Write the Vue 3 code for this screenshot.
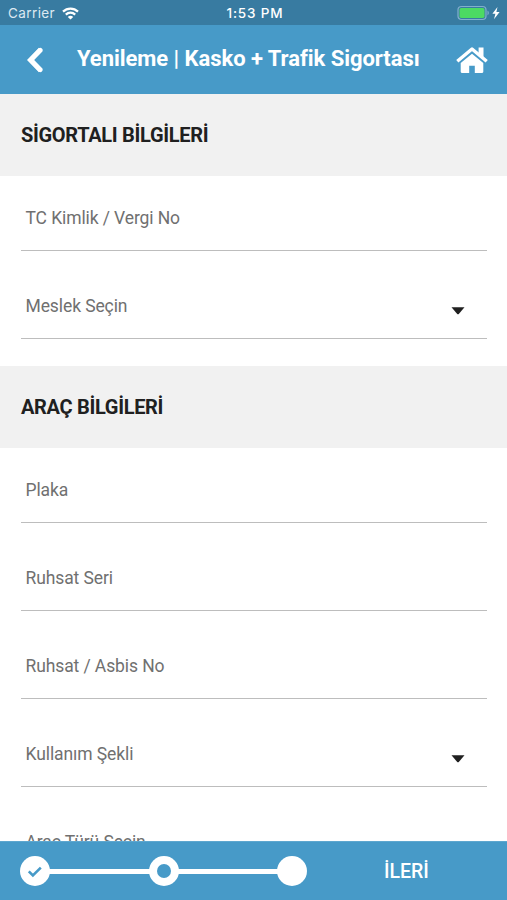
<script setup>
const sections = [
  {
    title: 'SİGORTALI BİLGİLERİ',
    cls: 'insured',
    fields: [
      { label: 'TC Kimlik / Vergi No' },
      { label: 'Meslek Seçin', select: true },
    ],
  },
  {
    title: 'ARAÇ BİLGİLERİ',
    cls: 'vehicle',
    fields: [
      { label: 'Plaka' },
      { label: 'Ruhsat Seri' },
      { label: 'Ruhsat / Asbis No' },
      { label: 'Kullanım Şekli', select: true },
      { label: 'Araç Türü Seçin', select: true },
    ],
  },
]
</script>

<template>
  <div class="screen">
    <div class="status">
      <div class="carrier">
        <span>Carrier</span>
        <svg class="wifi" width="17" height="13" viewBox="0 0 17 13" fill="none" stroke="#fff" stroke-width="2.2">
          <path d="M1 4.6C5.2.5 11.8.5 16 4.6" />
          <path d="M3.8 7.6c2.7-2.6 6.7-2.6 9.4 0" />
          <path d="M8.5 12.6L5.8 9.900c1.500-1.400 3.900-1.400 5.400 0z" fill="#fff" stroke="none" />
        </svg>
      </div>
      <span class="clock">1:53 PM</span>
      <svg class="battery" width="45" height="16" viewBox="0 0 45 16">
        <rect x="1" y="1.500" width="28" height="13" rx="3.500" fill="none" stroke="#82b0cc" stroke-width="1.200" />
        <rect x="2.500" y="3" width="25" height="10" rx="1.800" fill="#4cda63" />
        <path d="M30.500 5.600c1.800.8 1.800 4 0 4.800z" fill="#82b0cc" />
        <path d="M40.500 2L35.400 8.800h3L37 14.200l5.600-7.300h-3.200z" fill="#fff" />
      </svg>
    </div>

    <header class="bar">
      <svg class="back" width="18" height="26" viewBox="0 0 18 26">
        <path d="M14.700 2.600L4.600 13l10.100 10.400" fill="none" stroke="#fff" stroke-width="5" />
        <path d="M14.300 3.200L4.600 13l9.700 9.800" fill="none" stroke="#fff" stroke-width="4.600" stroke-linecap="round" />
      </svg>
      <h1>Yenileme | Kasko + Trafik Sigortası</h1>
      <svg class="home" width="34" height="28" viewBox="0 0 34 28">
        <path d="M2.300 15.300L17 3l14.700 12.300" fill="none" stroke="#fff" stroke-width="3.400" stroke-linejoin="round" />
        <path d="M23.600 1.500h4.900v11l-4.900-4z" fill="#fff" />
        <path d="M17 7.700l11.300 9.200v8.900q0 1.100-1.100 1.100h-7.400v-7.200h-5.600v7.200H6.800q-1.100 0-1.100-1.100v-8.900z" fill="#fff" />
      </svg>
    </header>

    <main class="content">
      <section v-for="s in sections" :key="s.title" :class="s.cls">
        <h2>{{ s.title }}</h2>
        <div class="fields">
          <div v-for="f in s.fields" :key="f.label" class="field">
            <span>{{ f.label }}</span>
            <svg v-if="f.select" class="caret" width="14" height="8" viewBox="0 0 14 8">
              <path d="M.5.200h13L7.800 7q-.8.700-1.600 0z" fill="#202020" />
            </svg>
          </div>
        </div>
      </section>
    </main>

    <footer class="footer">
      <div class="steps">
        <span class="dot">
          <svg width="16" height="13" viewBox="0 0 16 13">
            <path d="M1.800 6.300l4.100 4.200 7.900-7.900" fill="none" stroke="#479ac8" stroke-width="2.600" />
          </svg>
        </span>
        <span class="line"></span>
        <span class="dot"><i class="hole"></i></span>
        <span class="line"></span>
        <span class="dot"></span>
      </div>
      <div class="next">İLERİ</div>
    </footer>
  </div>
</template>

<style>
body {
  background: #fff;
}
</style>

<style scoped>
.screen {
  width: 507px;
  height: 900px;
  display: flex;
  flex-direction: column;
  overflow: hidden;
  font-family: Roboto, sans-serif;
  background: #fff;
}
.status {
  flex: none;
  height: 25px;
  display: grid;
  grid-template-columns: 1fr auto 1fr;
  align-items: center;
  padding: 1px 5px 0 8px;
  box-sizing: border-box;
  background: #387ba1;
  color: #fff;
  font-family: Inter, sans-serif;
  font-size: 13.500px;
}
.carrier {
  display: flex;
  align-items: center;
  gap: 7px;
  color: #dce9f1;
  font-size: 13.500px;
  letter-spacing: 0.400px;
}
.clock {
  font-weight: 500;
  letter-spacing: 0.850px;
}
.battery {
  justify-self: end;
}
.bar {
  flex: none;
  height: 69px;
  display: flex;
  align-items: center;
  padding: 0 18px 0 26px;
  box-sizing: border-box;
  background: #479ac8;
  color: #fff;
}
h1 {
  flex: 1;
  margin: -1px 0 0 33px;
  font-size: 22px;
  line-height: 28px;
  font-weight: 700;
  letter-spacing: -0.050px;
  white-space: nowrap;
}
.content {
  flex: 1;
  min-height: 0;
  overflow: hidden;
}
h2 {
  display: flex;
  align-items: center;
  height: 82px;
  margin: 0;
  padding: 0 0 1px 21px;
  box-sizing: border-box;
  background: #f1f1f1;
  color: #202020;
  font-size: 20px;
  font-weight: 700;
  letter-spacing: -0.320px;
}
.fields {
  display: grid;
  gap: 13px;
  padding: 0 20px 27px 21px;
}
.field {
  height: 75px;
  display: flex;
  align-items: center;
  justify-content: space-between;
  padding: 9px 22px 0 4.500px;
  box-sizing: border-box;
  border-bottom: 1px solid #bdbdbd;
  color: #707070;
  font-size: 17.500px;
  letter-spacing: -0.100px;
}
.caret {
  margin-top: 10px;
}
.footer {
  flex: none;
  height: 59px;
  display: flex;
  align-items: center;
  padding-left: 20px;
  box-sizing: border-box;
  border-top: 1px solid #5ea7cf;
  background: #479ac8;
  color: #fff;
}
.steps {
  width: 287px;
  display: flex;
  align-items: center;
}
.dot {
  flex: none;
  width: 30px;
  height: 30px;
  display: flex;
  align-items: center;
  justify-content: center;
  border-radius: 50%;
  background: #fff;
}
.hole {
  width: 14px;
  height: 14px;
  border-radius: 50%;
  background: #479ac8;
}
.line {
  flex: 1;
  height: 5px;
  margin: 0 -1px;
  background: #fff;
}
.next {
  margin-left: 77px;
  font-size: 19.500px;
  font-weight: 500;
}
</style>
